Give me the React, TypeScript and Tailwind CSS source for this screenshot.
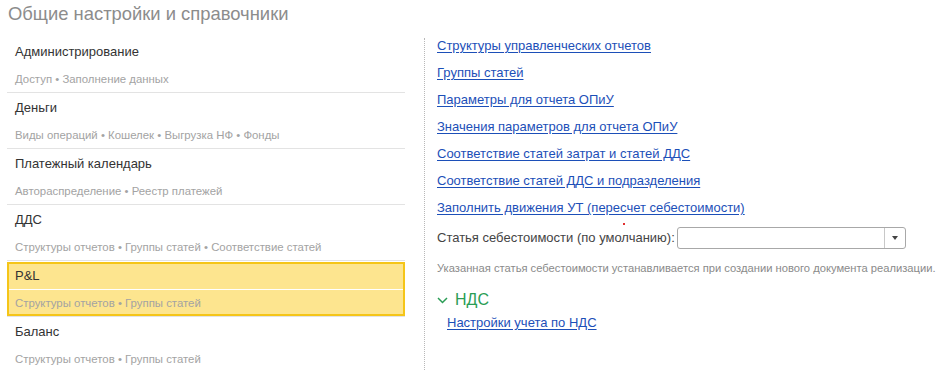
const sections = [
  { title: "Администрирование", items: ["Доступ", "Заполнение данных"] },
  { title: "Деньги", items: ["Виды операций", "Кошелек", "Выгрузка НФ", "Фонды"] },
  { title: "Платежный календарь", items: ["Автораспределение", "Реестр платежей"] },
  { title: "ДДС", items: ["Структуры отчетов", "Группы статей", "Соответствие статей"] },
  { title: "P&L", items: ["Структуры отчетов", "Группы статей"], active: true },
  { title: "Баланс", items: ["Структуры отчетов", "Группы статей"] },
];

const links = [
  "Структуры управленческих отчетов",
  "Группы статей",
  "Параметры для отчета ОПиУ",
  "Значения параметров для отчета ОПиУ",
  "Соответствие статей затрат и статей ДДС",
  "Соответствие статей ДДС и подразделения",
  "Заполнить движения УТ (пересчет себестоимости)",
];

const Subtitle = ({ items }: { items: string[] }) => (
  <div className="text-[11.4px] leading-[14px] text-[#a3a3a3]">{items.join(" • ")}</div>
);

export default function App() {
  return (
    <div className="relative h-[371px] w-[950px] overflow-hidden bg-white font-['Liberation_Sans',Arial,sans-serif]">
      <h1 className="pl-[8px] pt-[2px] text-[18.4px] leading-[24px] font-normal text-[#8c8c8c]">
        Общие настройки и справочники
      </h1>

      <div className="mt-[11px] flex">
        <div className="ml-[7px] w-[398px]">
          {sections.map((s) =>
            s.active ? (
              <div key={s.title} className="h-[56px] border-b border-[#e3e3e3] pt-[1px]">
                <div className="h-[54px] border-2 border-[#f5c518] bg-[#fde58f]">
                  <div className="h-[25px] pl-[6px] pt-[4px] text-[13px] leading-[16px] text-[#333]">
                    {s.title}
                  </div>
                  <div className="h-px bg-white" />
                  <div className="pl-[6px] pt-[6px]">
                    <Subtitle items={s.items} />
                  </div>
                </div>
              </div>
            ) : (
              <div key={s.title} className="h-[56px] border-b border-[#e3e3e3]">
                <div className="h-[28px] pl-[8px] pt-[7px] text-[13px] leading-[16px] text-[#333]">
                  {s.title}
                </div>
                <div className="h-px" />
                <div className="pl-[8px] pt-[6px]">
                  <Subtitle items={s.items} />
                </div>
              </div>
            ),
          )}
        </div>

        <div className="ml-[19px] mt-[1px] h-[340px] flex-1 border-l border-dotted border-[#b8b8b8] pl-[12px] text-[13px] leading-[16px]">
          {links.map((l) => (
            <div key={l} className="h-[27px]">
              <a href="#" className="text-[#1c4fb8] underline underline-offset-2">
                {l}
              </a>
            </div>
          ))}

          <div className="flex h-[22px] items-center">
            <span className="text-[#444]">Статья себестоимости (по умолчанию):</span>
            <div className="ml-[2px] flex h-[22px] w-[229px] rounded-[3px] border border-[#a8a8a8] bg-white">
              <div className="flex-1" />
              <div className="flex w-[21px] items-center justify-center border-l border-[#c8c8c8]">
                <span className="h-0 w-0 border-x-[3px] border-t-[4px] border-x-transparent border-t-[#444]" />
              </div>
            </div>
          </div>

          <p className="mt-[12px] text-[11.2px] leading-[14px] text-[#8a8a8a]">
            Указанная статья себестоимости устанавливается при создании нового документа реализации.
          </p>

          <div className="mt-[15px] flex h-[20px] items-center gap-[7px] text-[16px] leading-[20px] text-[#2a9d55]">
            <svg width="11" height="7" viewBox="0 0 11 7" fill="none">
              <path d="M1 1l4.5 4.5L10 1" stroke="#2a9d55" strokeWidth="1.5" />
            </svg>
            НДС
          </div>

          <div className="mt-[5px] pl-[10px]">
            <a href="#" className="text-[#1c4fb8] underline underline-offset-2">
              Настройки учета по НДС
            </a>
          </div>
        </div>
      </div>

      <span className="absolute left-[623px] top-[223px] h-[2px] w-[2px] bg-[#e03030]" />
    </div>
  );
}
